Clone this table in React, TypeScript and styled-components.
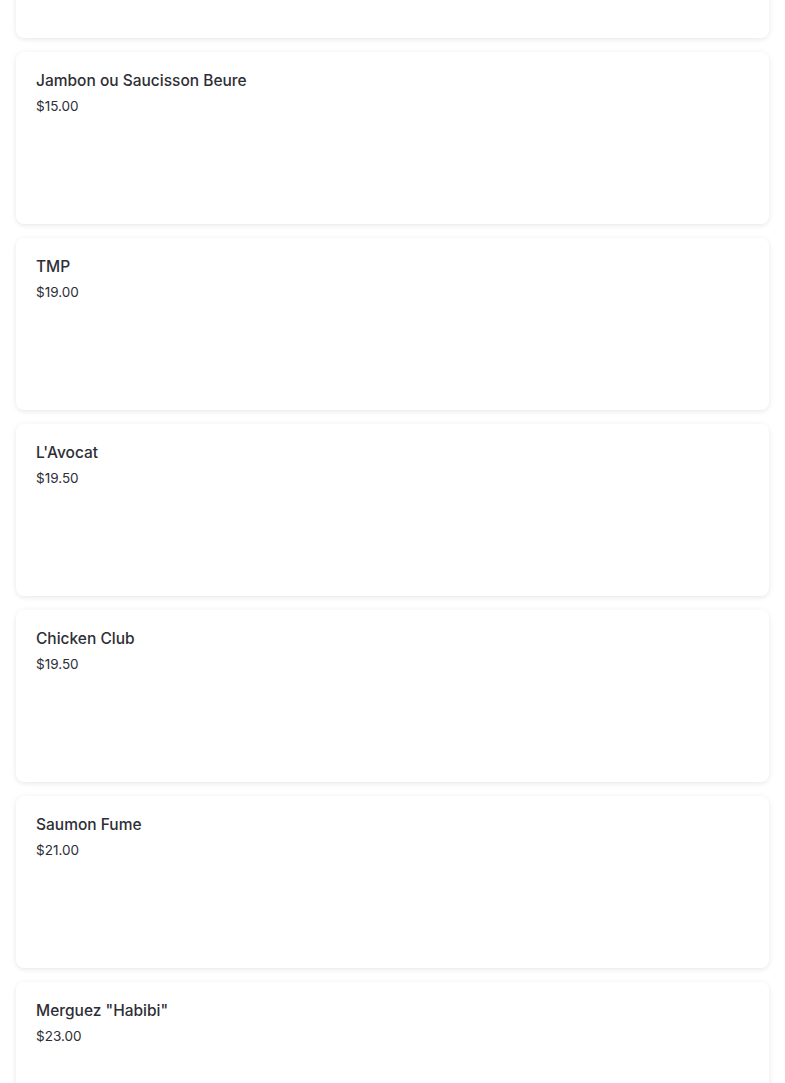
import React from "react";
import styled, { createGlobalStyle } from "styled-components";

const Global = createGlobalStyle`
  html, body { margin: 0; padding: 0; background: #ffffff; }
  body { font-family: Inter, "Noto Sans", sans-serif; overflow: hidden; }
`;

const List = styled.div`
  display: flex;
  flex-direction: column;
  gap: 14px;
  padding: 0 16px;
  margin-top: -134px;
`;

const Card = styled.div`
  height: 172px;
  box-sizing: border-box;
  padding: 19px 20px;
  background: #ffffff;
  border-radius: 8px;
  box-shadow: 0 1px 6px rgba(0, 0, 0, 0.07), 0 2px 4px rgba(0, 0, 0, 0.03);
  display: flex;
  flex-direction: column;
  gap: 7px;
`;

const Title = styled.div`
  font-size: 15.5px;
  line-height: 20px;
  font-weight: 500;
  color: #2e2e36;
`;

const Price = styled.div`
  font-size: 13.5px;
  line-height: 16px;
  font-weight: 400;
  color: #2e2e36;
`;

const items = [
  { name: "Jambon ou Saucisson Beure", price: "$15.00" },
  { name: "TMP", price: "$19.00" },
  { name: "L'Avocat", price: "$19.50" },
  { name: "Chicken Club", price: "$19.50" },
  { name: "Saumon Fume", price: "$21.00" },
  { name: 'Merguez "Habibi"', price: "$23.00" },
];

export default function App() {
  return (
    <>
      <Global />
      <List>
        <Card />
        {items.map((it) => (
          <Card key={it.name}>
            <Title>{it.name}</Title>
            <Price>{it.price}</Price>
          </Card>
        ))}
      </List>
    </>
  );
}
